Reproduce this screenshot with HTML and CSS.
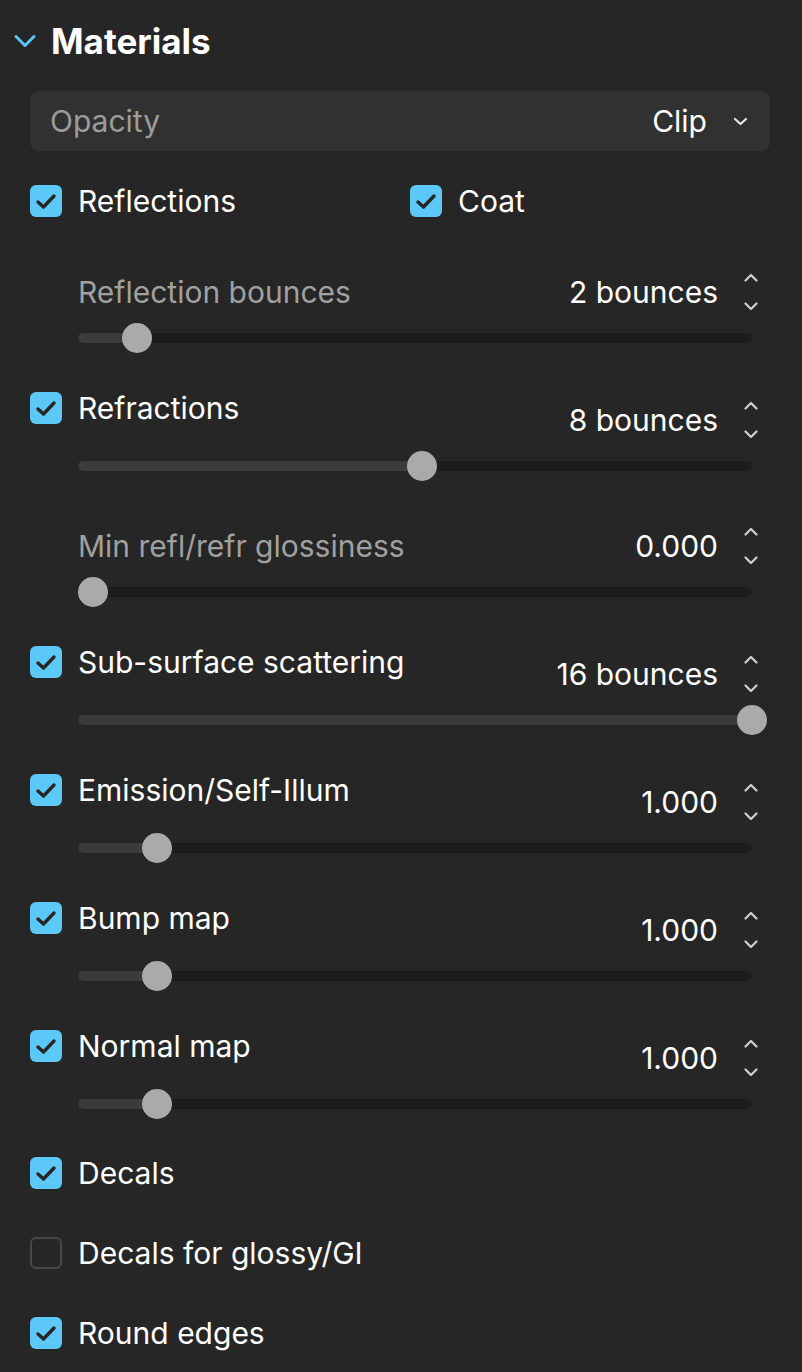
FILE: index.html
```html
<!DOCTYPE html>
<html>
<head>
<meta charset="utf-8">
<link rel="stylesheet" href="styles.css">
</head>
<body>
<div class="panel">
  <div class="header">
    <svg class="header-chev" width="22" height="14" viewBox="0 0 22 14"><path d="M2 2.5 L11 11.5 L20 2.5" fill="none" stroke="#5bc4f2" stroke-width="3" stroke-linecap="round" stroke-linejoin="round"/></svg>
    <h1 class="title">Materials</h1>
  </div>

  <div class="select">
    <span class="select-label">Opacity</span>
    <span class="select-value">Clip</span>
    <svg class="select-chev" width="15" height="9" viewBox="0 0 15 9"><path d="M2 2 L7.5 7 L13 2" fill="none" stroke="#e6e6e6" stroke-width="2.2" stroke-linecap="round" stroke-linejoin="round"/></svg>
  </div>

  <div class="check-pair">
    <div class="check"><span class="box on"><svg width="32" height="32" viewBox="0 0 32 32"><path d="M8 17 L13.5 22 L24 11" fill="none" stroke="#262626" stroke-width="3.4" stroke-linecap="round" stroke-linejoin="round"/></svg></span><span class="check-text">Reflections</span></div>
    <div class="check"><span class="box on"><svg width="32" height="32" viewBox="0 0 32 32"><path d="M8 17 L13.5 22 L24 11" fill="none" stroke="#262626" stroke-width="3.4" stroke-linecap="round" stroke-linejoin="round"/></svg></span><span class="check-text">Coat</span></div>
  </div>

  <div class="slider sub first-sub">
    <div class="slider-head">
      <span class="slider-label">Reflection bounces</span>
      <div class="val"><span class="value">2 bounces</span><span class="stepper"><svg width="14" height="42" viewBox="0 0 14 42"><path d="M1.5 9.5 L7 4 L12.5 9.5 M1.5 32.5 L7 38 L12.5 32.5" fill="none" stroke="#d0d0d0" stroke-width="2.2" stroke-linecap="round" stroke-linejoin="round"/></svg></span></div>
    </div>
    <div class="track"><div class="fill" style="width:59px"></div><div class="thumb" style="left:44px"></div></div>
  </div>

  <div class="slider checked">
    <div class="slider-head">
      <div class="check"><span class="box on"><svg width="32" height="32" viewBox="0 0 32 32"><path d="M8 17 L13.5 22 L24 11" fill="none" stroke="#262626" stroke-width="3.4" stroke-linecap="round" stroke-linejoin="round"/></svg></span><span class="check-text">Refractions</span></div>
      <div class="val"><span class="value">8 bounces</span><span class="stepper"><svg width="14" height="42" viewBox="0 0 14 42"><path d="M1.5 9.5 L7 4 L12.5 9.5 M1.5 32.5 L7 38 L12.5 32.5" fill="none" stroke="#d0d0d0" stroke-width="2.2" stroke-linecap="round" stroke-linejoin="round"/></svg></span></div>
    </div>
    <div class="track"><div class="fill" style="width:344px"></div><div class="thumb" style="left:329px"></div></div>
  </div>

  <div class="slider sub second-sub">
    <div class="slider-head">
      <span class="slider-label">Min refl/refr glossiness</span>
      <div class="val"><span class="value">0.000</span><span class="stepper"><svg width="14" height="42" viewBox="0 0 14 42"><path d="M1.5 9.5 L7 4 L12.5 9.5 M1.5 32.5 L7 38 L12.5 32.5" fill="none" stroke="#d0d0d0" stroke-width="2.2" stroke-linecap="round" stroke-linejoin="round"/></svg></span></div>
    </div>
    <div class="track"><div class="fill" style="width:0px"></div><div class="thumb" style="left:0px"></div></div>
  </div>

  <div class="slider checked">
    <div class="slider-head">
      <div class="check"><span class="box on"><svg width="32" height="32" viewBox="0 0 32 32"><path d="M8 17 L13.5 22 L24 11" fill="none" stroke="#262626" stroke-width="3.4" stroke-linecap="round" stroke-linejoin="round"/></svg></span><span class="check-text">Sub-surface scattering</span></div>
      <div class="val"><span class="value">16 bounces</span><span class="stepper"><svg width="14" height="42" viewBox="0 0 14 42"><path d="M1.5 9.5 L7 4 L12.5 9.5 M1.5 32.5 L7 38 L12.5 32.5" fill="none" stroke="#d0d0d0" stroke-width="2.2" stroke-linecap="round" stroke-linejoin="round"/></svg></span></div>
    </div>
    <div class="track"><div class="fill" style="width:674px"></div><div class="thumb" style="left:659px"></div></div>
  </div>

  <div class="slider checked">
    <div class="slider-head">
      <div class="check"><span class="box on"><svg width="32" height="32" viewBox="0 0 32 32"><path d="M8 17 L13.5 22 L24 11" fill="none" stroke="#262626" stroke-width="3.4" stroke-linecap="round" stroke-linejoin="round"/></svg></span><span class="check-text">Emission/Self-Illum</span></div>
      <div class="val"><span class="value">1.000</span><span class="stepper"><svg width="14" height="42" viewBox="0 0 14 42"><path d="M1.5 9.5 L7 4 L12.5 9.5 M1.5 32.5 L7 38 L12.5 32.5" fill="none" stroke="#d0d0d0" stroke-width="2.2" stroke-linecap="round" stroke-linejoin="round"/></svg></span></div>
    </div>
    <div class="track"><div class="fill" style="width:79px"></div><div class="thumb" style="left:64px"></div></div>
  </div>

  <div class="slider checked">
    <div class="slider-head">
      <div class="check"><span class="box on"><svg width="32" height="32" viewBox="0 0 32 32"><path d="M8 17 L13.5 22 L24 11" fill="none" stroke="#262626" stroke-width="3.4" stroke-linecap="round" stroke-linejoin="round"/></svg></span><span class="check-text">Bump map</span></div>
      <div class="val"><span class="value">1.000</span><span class="stepper"><svg width="14" height="42" viewBox="0 0 14 42"><path d="M1.5 9.5 L7 4 L12.5 9.5 M1.5 32.5 L7 38 L12.5 32.5" fill="none" stroke="#d0d0d0" stroke-width="2.2" stroke-linecap="round" stroke-linejoin="round"/></svg></span></div>
    </div>
    <div class="track"><div class="fill" style="width:79px"></div><div class="thumb" style="left:64px"></div></div>
  </div>

  <div class="slider checked">
    <div class="slider-head">
      <div class="check"><span class="box on"><svg width="32" height="32" viewBox="0 0 32 32"><path d="M8 17 L13.5 22 L24 11" fill="none" stroke="#262626" stroke-width="3.4" stroke-linecap="round" stroke-linejoin="round"/></svg></span><span class="check-text">Normal map</span></div>
      <div class="val"><span class="value">1.000</span><span class="stepper"><svg width="14" height="42" viewBox="0 0 14 42"><path d="M1.5 9.5 L7 4 L12.5 9.5 M1.5 32.5 L7 38 L12.5 32.5" fill="none" stroke="#d0d0d0" stroke-width="2.2" stroke-linecap="round" stroke-linejoin="round"/></svg></span></div>
    </div>
    <div class="track"><div class="fill" style="width:79px"></div><div class="thumb" style="left:64px"></div></div>
  </div>

  <div class="check row first-row"><span class="box on"><svg width="32" height="32" viewBox="0 0 32 32"><path d="M8 17 L13.5 22 L24 11" fill="none" stroke="#262626" stroke-width="3.4" stroke-linecap="round" stroke-linejoin="round"/></svg></span><span class="check-text">Decals</span></div>
  <div class="check row"><span class="box off"></span><span class="check-text">Decals for glossy/GI</span></div>
  <div class="check row"><span class="box on"><svg width="32" height="32" viewBox="0 0 32 32"><path d="M8 17 L13.5 22 L24 11" fill="none" stroke="#262626" stroke-width="3.4" stroke-linecap="round" stroke-linejoin="round"/></svg></span><span class="check-text">Round edges</span></div>
</div>
</body>
</html>
```

FILE: styles.css
```css
html, body {
  margin: 0;
  padding: 0;
  background: #262626;
}

body {
  font-family: Inter, "Noto Sans", sans-serif;
  color: #ffffff;
  font-size: 30px;
}

.panel {
  display: flex;
  flex-direction: column;
  padding: 0 32px 40px 30px;
}

.header {
  height: 82px;
  display: flex;
  align-items: center;
  margin-left: -16px;
  gap: 15px;
}

.header-chev {
  display: block;
  flex: none;
}

.title {
  margin: 0;
  font-size: 35px;
  font-weight: 700;
  line-height: 1;
  color: #ffffff;
}

.select {
  margin-top: 9px;
  height: 60px;
  border-radius: 9px;
  background: #313131;
  display: flex;
  align-items: center;
  padding: 0 22px 0 20px;
}

.select-label {
  flex: 1;
  color: #9c9c9c;
}

.select-value {
  color: #ffffff;
  margin-right: 26px;
}

.select-chev {
  display: block;
}

.check-pair {
  margin-top: 34px;
  display: grid;
  grid-template-columns: 380px 1fr;
}

.check {
  display: flex;
  align-items: center;
  gap: 16px;
  height: 32px;
}

.box {
  width: 32px;
  height: 32px;
  border-radius: 6px;
  flex: none;
  box-sizing: border-box;
}

.box svg {
  display: block;
}

.box.on {
  background: #5bc8f7;
}

.box.off {
  border: 2px solid #474747;
}

.check-text {
  line-height: 1;
  color: #ffffff;
}

.slider {
  display: flex;
  flex-direction: column;
  margin-top: 39px;
}

.slider.first-sub {
  margin-top: 54px;
}

.slider.second-sub {
  margin-top: 44px;
}

.slider-head {
  display: flex;
  justify-content: space-between;
  align-items: center;
  height: 42px;
  padding-right: 12px;
}

.slider.sub .slider-head {
  padding-left: 48px;
}

.slider.checked .slider-head {
  height: 49px;
  align-items: flex-start;
}

.slider.checked .val {
  margin-top: 7px;
}

.slider-label {
  color: #a0a0a0;
  line-height: 1;
}

.val {
  display: flex;
  align-items: center;
  height: 42px;
}

.value {
  margin-right: 26px;
  line-height: 1;
}

.stepper svg {
  display: block;
}

.track {
  position: relative;
  margin: 10px 18px 0 48px;
  height: 30px;
}

.track::before {
  content: "";
  position: absolute;
  left: 0;
  right: 0;
  top: 10px;
  height: 10px;
  border-radius: 5px;
  background: #1d1d1d;
}

.fill {
  position: absolute;
  left: 0;
  top: 10px;
  height: 10px;
  border-radius: 5px;
  background: #3b3b3b;
}

.thumb {
  position: absolute;
  top: 0;
  width: 30px;
  height: 30px;
  border-radius: 50%;
  background: #aaaaaa;
}

.row {
  margin-top: 48px;
}

.row.first-row {
  margin-top: 38px;
}
```
